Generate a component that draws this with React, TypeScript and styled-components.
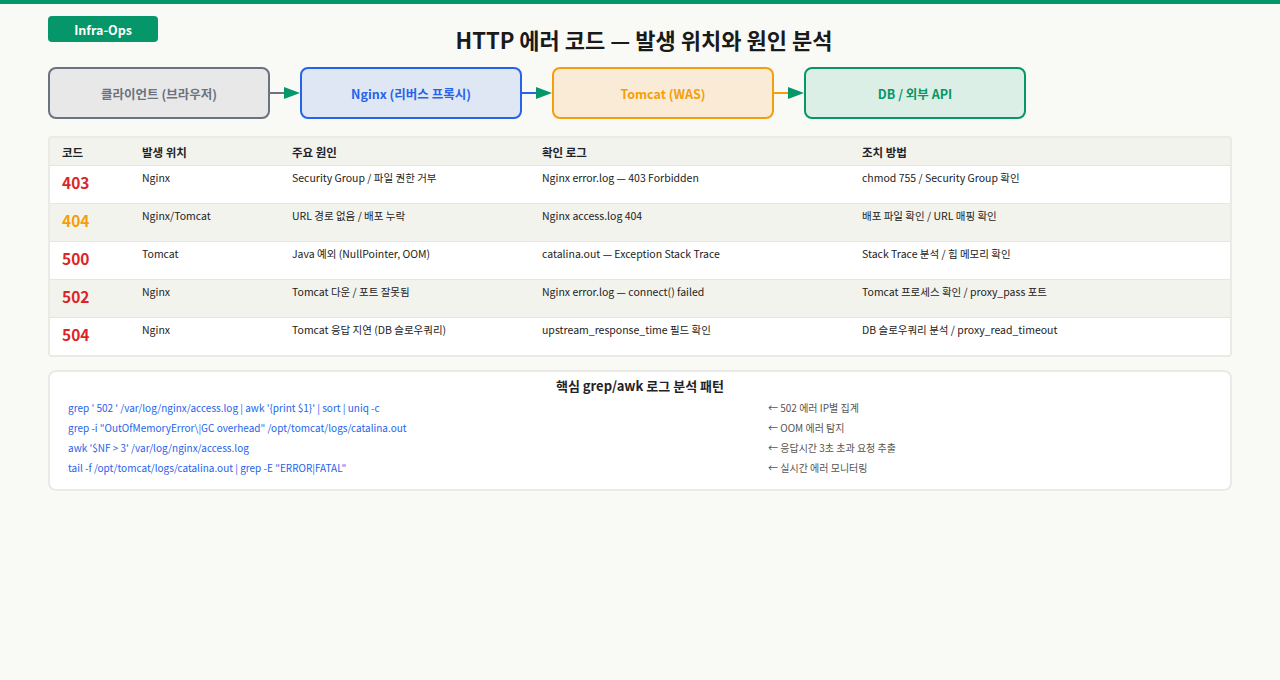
import React from 'react'
import styled, { createGlobalStyle } from 'styled-components'

const Global = createGlobalStyle`
    body {
        margin: 0;
        background: #f9f9f6;
        font-family: "Noto Sans CJK KR", "Noto Sans", sans-serif;
        color: #1f2328;
    }
`

const TopBar = styled.div`
    height: 4px;
    background: #059669;
`

const Page = styled.div`
    padding: 12px 48px 0;
    width: 1184px;
`

const Header = styled.div`
    position: relative;
    height: 38px;
    display: flex;
    justify-content: center;
    align-items: flex-end;
`

const Badge = styled.div`
    position: absolute;
    left: 0;
    top: 0;
    width: 110px;
    height: 26px;
    border-radius: 4px;
    background: #059669;
    color: #fff;
    font-size: 12.5px;
    font-weight: 700;
    display: flex;
    align-items: center;
    justify-content: center;
`

const Title = styled.h1`
    margin: 0 0 0 8px;
    font-size: 22px;
    font-weight: 700;
    line-height: 30px;
    color: #1a1a1a;
`

const Flow = styled.div`
    display: flex;
    align-items: center;
    margin-top: 13px;
`

const Node = styled.div<{ $border: string; $bg: string; $color: string }>`
    width: 222px;
    height: 52px;
    box-sizing: border-box;
    border: 2px solid ${({ $border }) => $border};
    background: ${({ $bg }) => $bg};
    color: ${({ $color }) => $color};
    border-radius: 8px;
    display: flex;
    align-items: center;
    justify-content: center;
    font-size: 12.5px;
    font-weight: 700;
`

const Table = styled.div`
    margin-top: 17px;
    border: 2px solid #ebebe5;
    border-radius: 4px;
    overflow: hidden;
    background: #fff;
`

const Row = styled.div<{ $bg: string; $h: number }>`
    display: grid;
    grid-template-columns: 80px 150px 250px 320px 1fr;
    padding: 0 12px;
    height: ${({ $h }) => $h}px;
    background: ${({ $bg }) => $bg};
    border-top: 1px solid #e6e6e0;
    &:first-child { border-top: none; }
`

const Th = styled.div`
    font-size: 11.5px;
    font-weight: 700;
    display: flex;
    align-items: center;
`

const Td = styled.div`
    font-size: 10.5px;
    padding-top: 4px;
    color: #222;
`

const Code = styled.div<{ $color: string }>`
    font-size: 15.5px;
    font-weight: 700;
    color: ${({ $color }) => $color};
    padding-top: 5px;
`

const Panel = styled.div`
    margin-top: 13px;
    border: 2px solid #ebebe5;
    border-radius: 8px;
    background: #fff;
    height: 121px;
    box-sizing: border-box;
    padding: 3px 18px 0;
`

const PanelTitle = styled.div`
    text-align: center;
    font-size: 13px;
    font-weight: 700;
    line-height: 22px;
`

const CmdGrid = styled.div`
    display: grid;
    grid-template-columns: 700px 1fr;
    grid-auto-rows: 20px;
    font-size: 10px;
    align-items: center;
`

const Cmd = styled.div`
    color: #2563eb;
`

const Note = styled.div`
    color: #555;
`

function Arrow({ color }: { color: string }) {
    return (
        <svg width="30" height="14" viewBox="0 0 30 14">
            <line x1="0" y1="7" x2="16" y2="7" stroke={color} strokeWidth="2" />
            <polygon points="14,1 30,7 14,13" fill="#059669" />
        </svg>
    )
}

const nodes = [
    { label: '클라이언트 (브라우저)', border: '#6b7280', bg: '#e8e8e8', color: '#6b7280', line: '#6b7280' },
    { label: 'Nginx (리버스 프록시)', border: '#2563eb', bg: '#e0e7f4', color: '#2563eb', line: '#2563eb' },
    { label: 'Tomcat (WAS)', border: '#f59e0b', bg: '#faebd7', color: '#f59e0b', line: '#f59e0b' },
    { label: 'DB / 외부 API', border: '#059669', bg: '#dcefe6', color: '#059669', line: '' },
]

const rows = [
    ['403', '#dc2626', 'Nginx', 'Security Group / 파일 권한 거부', 'Nginx error.log — 403 Forbidden', 'chmod 755 / Security Group 확인'],
    ['404', '#f59e0b', 'Nginx/Tomcat', 'URL 경로 없음 / 배포 누락', 'Nginx access.log 404', '배포 파일 확인 / URL 매핑 확인'],
    ['500', '#dc2626', 'Tomcat', 'Java 예외 (NullPointer, OOM)', 'catalina.out — Exception Stack Trace', 'Stack Trace 분석 / 힙 메모리 확인'],
    ['502', '#dc2626', 'Nginx', 'Tomcat 다운 / 포트 잘못됨', 'Nginx error.log — connect() failed', 'Tomcat 프로세스 확인 / proxy_pass 포트'],
    ['504', '#dc2626', 'Nginx', 'Tomcat 응답 지연 (DB 슬로우쿼리)', 'upstream_response_time 필드 확인', 'DB 슬로우쿼리 분석 / proxy_read_timeout'],
]

const cmds = [
    ["grep ' 502 ' /var/log/nginx/access.log | awk '{print $1}' | sort | uniq -c", '← 502 에러 IP별 집계'],
    ['grep -i "OutOfMemoryError\\|GC overhead" /opt/tomcat/logs/catalina.out', '← OOM 에러 탐지'],
    ["awk '$NF > 3' /var/log/nginx/access.log", '← 응답시간 3초 초과 요청 추출'],
    ['tail -f /opt/tomcat/logs/catalina.out | grep -E "ERROR|FATAL"', '← 실시간 에러 모니터링'],
]

export default function App() {
    return (
        <>
            <Global />
            <TopBar />
            <Page>
                <Header>
                    <Badge>Infra-Ops</Badge>
                    <Title>HTTP 에러 코드 — 발생 위치와 원인 분석</Title>
                </Header>
                <Flow>
                    {nodes.map((n) => (
                        <React.Fragment key={n.label}>
                            <Node $border={n.border} $bg={n.bg} $color={n.color}>{n.label}</Node>
                            {n.line && <Arrow color={n.line} />}
                        </React.Fragment>
                    ))}
                </Flow>
                <Table>
                    <Row $bg="#f3f3ee" $h={27}>
                        {['코드', '발생 위치', '주요 원인', '확인 로그', '조치 방법'].map((h) => <Th key={h}>{h}</Th>)}
                    </Row>
                    {rows.map((r, i) => (
                        <Row key={r[0]} $bg={i % 2 ? '#f3f3ee' : '#fff'} $h={37}>
                            <Code $color={r[1]}>{r[0]}</Code>
                            <Td>{r[2]}</Td>
                            <Td>{r[3]}</Td>
                            <Td>{r[4]}</Td>
                            <Td>{r[5]}</Td>
                        </Row>
                    ))}
                </Table>
                <Panel>
                    <PanelTitle>핵심 grep/awk 로그 분석 패턴</PanelTitle>
                    <CmdGrid>
                        {cmds.map(([c, n]) => (
                            <React.Fragment key={c}>
                                <Cmd>{c}</Cmd>
                                <Note>{n}</Note>
                            </React.Fragment>
                        ))}
                    </CmdGrid>
                </Panel>
            </Page>
        </>
    )
}
